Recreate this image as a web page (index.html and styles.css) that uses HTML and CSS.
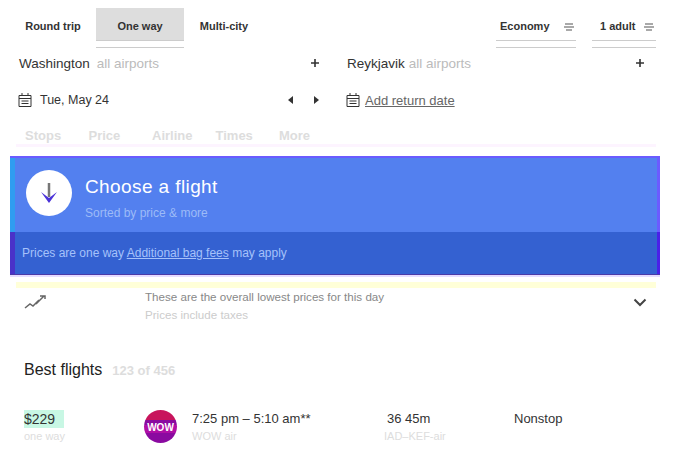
FILE: index.html
```html
<!DOCTYPE html>
<html lang="en">
<head>
  <meta charset="UTF-8">
  <meta name="viewport" content="width=device-width, initial-scale=1.0">
  <title>Flights</title>
  <link rel="stylesheet" href="styles.css">
</head>
<body>
  <div class="options">
    <div class="trip-tabs">
      <div class="tab">Round trip</div>
      <div class="tab tab-active">One way</div>
      <div class="tab">Multi-city</div>
    </div>
    <div class="select select-class">Economy
      <svg class="sort" width="12" height="10" viewBox="0 0 12 10"><path d="M2 2h8M1 5h10M3 8h6" stroke="#555" stroke-width="1.2"/></svg>
    </div>
    <div class="select select-people">1 adult
      <svg class="sort" width="12" height="10" viewBox="0 0 12 10"><path d="M2 2h8M1 5h10M3 8h6" stroke="#555" stroke-width="1.2"/></svg>
    </div>
  </div>

  <div class="places">
    <div class="place">
      <span class="city">Washington</span><span class="muted">all airports</span>
      <svg class="plus" width="10" height="10" viewBox="0 0 10 10"><path d="M5 1v8M1 5h8" stroke="#333" stroke-width="1.6"/></svg>
    </div>
    <div class="place place-right">
      <span class="city">Reykjavik</span><span class="muted">all airports</span>
      <svg class="plus" width="10" height="10" viewBox="0 0 10 10"><path d="M5 1v8M1 5h8" stroke="#333" stroke-width="1.6"/></svg>
    </div>
  </div>

  <div class="dates">
    <div class="date">
      <svg width="14" height="14" viewBox="0 0 14 14"><path d="M1 2.5h12v11h-12zM1 5.5h12M4 0v3M10 0v3M3.5 8h7M3.5 10.5h7" fill="none" stroke="#333"/></svg>
      <span class="date-text">Tue, May 24</span>
      <div class="arrows">
        <svg width="8" height="8" viewBox="0 0 8 8"><path d="M6 0v8L1 4z" fill="#333"/></svg>
        <svg width="8" height="8" viewBox="0 0 8 8"><path d="M2 0v8l5-4z" fill="#333"/></svg>
      </div>
    </div>
    <div class="date date-right">
      <svg width="14" height="14" viewBox="0 0 14 14"><path d="M1 2.5h12v11h-12zM1 5.5h12M4 0v3M10 0v3M3.5 8h7M3.5 10.5h7" fill="none" stroke="#333"/></svg>
      <a class="return-link">Add return date</a>
    </div>
  </div>

  <div class="filters">
    <span>Stops</span><span>Price</span><span>Airline</span><span>Times</span><span>More</span>
  </div>
  <div class="pale-line"></div>

  <div class="banner">
    <div class="banner-top">
      <div class="banner-icon">
        <svg width="22" height="24" viewBox="0 0 22 24"><path d="M11 2v14" stroke="#777" stroke-width="2.5"/><path d="M3 11l8 11 8-11-8 6z" fill="#4a32d8"/></svg>
      </div>
      <div class="banner-text">
        <div class="banner-title">Choose a flight</div>
        <div class="banner-sub">Sorted by price &amp; more</div>
      </div>
    </div>
    <div class="banner-bottom">Prices are one way <u>Additional bag fees</u> may apply</div>
  </div>
  <div class="yellow-line"></div>

  <div class="price-note">
    <svg class="trend" width="24" height="16" viewBox="0 0 24 16"><path d="M1 14l5-4 3 2 6-6M12 10l8-8M16 2h5v3" fill="none" stroke="#666" stroke-width="1.5"/></svg>
    <div class="note-text">
      <div>These are the overall lowest prices for this day</div>
      <div class="muted-line">Prices include taxes</div>
    </div>
    <svg class="chevron" width="14" height="9" viewBox="0 0 14 9"><path d="M1.5 1.5L7 7l5.5-5.5" fill="none" stroke="#444" stroke-width="2"/></svg>
  </div>

  <div class="best-head">
    <span class="best-title">Best flights</span><span class="best-count">123 of 456</span>
  </div>

  <div class="flight">
    <div class="col-price">
      <div class="price">$229</div>
      <div class="sub">one way</div>
    </div>
    <div class="logo">WOW</div>
    <div class="col-time">
      <div>7:25 pm – 5:10 am**</div>
      <div class="sub">WOW air</div>
    </div>
    <div class="col-duration">
      <div class="duration">36 45m</div>
      <div class="sub">IAD–KEF-air</div>
    </div>
    <div class="col-stops">Nonstop</div>
  </div>
</body>
</html>
```

FILE: styles.css
```css
/* Basic styles */
body {
  margin: 0;
  height: 466px;
  overflow: hidden;
  background-color: #fff;
  color: #333;
  font-family: "Liberation Sans", Arial, sans-serif;
  font-size: 13px;
}
.muted {
  color: #bbb;
}

/* Top options: the two grey rules sit at the foot of each control */
.options {
  display: flex;
  height: 48px;
  padding-top: 8px;
  box-sizing: border-box;
  font-size: 11px;
  font-weight: bold;
}
.trip-tabs {
  display: flex;
  width: 496px;
  padding-left: 13px;
  box-sizing: border-box;
}
.tab {
  width: 80px;
  height: 40px;
  line-height: 37px;
  text-align: center;
}
.tab-active {
  width: 88px;
  margin-left: 3px;
  background:
    linear-gradient(#ccc, #ccc) 0 32px / 100% 1px no-repeat,
    linear-gradient(#ccc, #ccc) 0 39px / 100% 1px no-repeat,
    linear-gradient(#ddd, #ddd) 0 0 / 100% 32px no-repeat;
}
.select {
  display: flex;
  justify-content: space-between;
  height: 40px;
  padding: 12px 1px 0 4px;
  box-sizing: border-box;
  background:
    linear-gradient(#ccc, #ccc) 0 32px / 100% 1px no-repeat,
    linear-gradient(#ccc, #ccc) 0 39px / 100% 1px no-repeat;
}
.sort {
  margin-top: 2px;
}
.select-class {
  width: 80px;
}
.select-people {
  width: 64px;
  margin-left: 16px;
  padding-left: 8px;
}

/* Origin and destination */
.places {
  display: flex;
  height: 30px;
  font-size: 13.5px;
}
.place {
  display: flex;
  align-items: center;
  width: 328px;
  padding-left: 19px;
  box-sizing: border-box;
}
.place-right {
  width: 325px;
}
.city {
  margin-right: 7px;
}
.place-right .city {
  margin-right: 4px;
}
.place .muted {
  font-size: 13.5px;
}
.plus {
  margin-left: auto;
  margin-right: 8px;
}

/* Dates */
.dates {
  display: flex;
  height: 40px;
  margin-top: 2px;
}
.date {
  display: flex;
  align-items: center;
  width: 328px;
  padding-left: 18px;
  box-sizing: border-box;
}
.date-right {
  width: 300px;
}
.date-text {
  margin-left: 8px;
  font-size: 12.5px;
}
.arrows {
  display: flex;
  gap: 17px;
  margin-left: auto;
  margin-right: 8px;
}
.return-link {
  margin-left: 5px;
  color: #666;
  text-decoration: underline;
}

/* Filter row */
.filters {
  display: flex;
  height: 24px;
  padding-left: 25px;
  color: #ddd;
  font-weight: bold;
  line-height: 32px;
}
.filters span {
  width: 63.5px;
}
.pale-line {
  width: 640px;
  height: 3px;
  margin-left: 16px;
  background-color: #fdf4ff;
}

/* Blue banner */
.banner {
  width: 650px;
  height: 119px;
  margin: 9px 0 0 10px;
  box-sizing: border-box;
  border-top: 2px solid #6b5bff;
  border-bottom: 1px solid #4a3aa8;
  box-shadow: 0 2px 0 #e6dcff;
}
.banner-top {
  display: flex;
  align-items: center;
  gap: 13px;
  height: 74px;
  padding-left: 11px;
  box-sizing: border-box;
  border-left: 5px solid #2f9df0;
  border-right: 3px solid #6b5bff;
  background-color: #5380ef;
  color: #fff;
}
.banner-icon {
  display: flex;
  align-items: center;
  justify-content: center;
  width: 46px;
  height: 46px;
  margin-bottom: 4px;
  border-radius: 50%;
  background-color: #fff;
}
.banner-text {
  padding-top: 5px;
}
.banner-title {
  font-size: 19px;
  letter-spacing: 0.4px;
}
.banner-sub {
  margin-top: 8px;
  color: #9dbbf7;
  font-size: 12px;
}
.banner-bottom {
  height: 42px;
  padding-left: 7px;
  box-sizing: border-box;
  border-left: 5px solid #4a32c8;
  border-right: 3px solid #4a20e8;
  background-color: #3461d1;
  color: #a6c2fa;
  font-size: 12px;
  line-height: 42px;
}
.yellow-line {
  width: 640px;
  height: 6px;
  margin: 7px 0 0 16px;
  background-color: #ffffd8;
}

/* Price note */
.price-note {
  display: flex;
  height: 42px;
}
.trend {
  margin: 6px 0 0 24px;
}
.note-text {
  margin-left: 97px;
  color: #888;
  font-size: 11.6px;
  line-height: 18px;
}
.muted-line {
  color: #ccc;
}
.chevron {
  margin: 10px 28px 0 auto;
}

/* Flight list */
.best-head {
  display: flex;
  align-items: center;
  height: 30px;
  margin-top: 25px;
  padding-left: 24px;
}
.best-title {
  color: #222;
  font-size: 16px;
}
.best-count {
  margin-left: 10px;
  color: #ddd;
  font-size: 13px;
  font-weight: bold;
}
.flight {
  display: flex;
  margin-top: 25px;
  padding-left: 24px;
  line-height: 18px;
}
.sub {
  margin-top: -1px;
  color: #ddd;
  font-size: 11px;
}
.col-price {
  width: 120px;
}
.price {
  width: 40px;
  background-color: #c8f7e4;
  font-size: 14px;
}
.logo {
  width: 33px;
  height: 33px;
  border-radius: 50%;
  background: linear-gradient(#c8145c 0 30%, #8a0aa0 30% 45%, #b00fa5 45% 70%, #8a0aa0 70%);
  color: #fff;
  font-size: 10px;
  font-weight: bold;
  line-height: 35px;
  text-align: center;
}
.col-time {
  width: 192px;
  margin-left: 15px;
}
.col-duration {
  width: 130px;
}
.duration {
  padding-left: 3px;
}
```
